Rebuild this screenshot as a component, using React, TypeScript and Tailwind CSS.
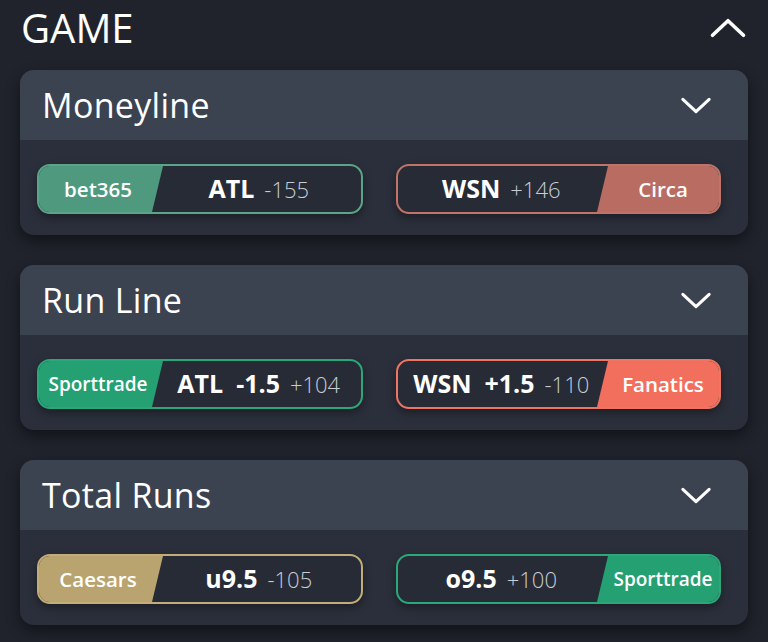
import React from 'react';

type Side = {
  book: string;
  color: string;
  main: string;
  odds: string;
};

type Market = {
  title: string;
  left: Side;
  right: Side;
};

const markets: Market[] = [
  {
    title: 'Moneyline',
    left: { book: 'bet365', color: 'green', main: 'ATL', odds: '-155' },
    right: { book: 'Circa', color: 'circa', main: 'WSN', odds: '+146' },
  },
  {
    title: 'Run Line',
    left: { book: 'Sporttrade', color: 'sporttrade', main: 'ATL  -1.5', odds: '+104' },
    right: { book: 'Fanatics', color: 'fanatics', main: 'WSN  +1.5', odds: '-110' },
  },
  {
    title: 'Total Runs',
    left: { book: 'Caesars', color: 'caesars', main: 'u9.5', odds: '-105' },
    right: { book: 'Sporttrade', color: 'sporttrade', main: 'o9.5', odds: '+100' },
  },
];

const colors: Record<string, { bg: string; border: string }> = {
  green: { bg: 'bg-[#4f9a7e]', border: 'border-[#5aa489]' },
  circa: { bg: 'bg-[#b96c62]', border: 'border-[#c07368]' },
  sporttrade: { bg: 'bg-[#24a073]', border: 'border-[#2aa87a]' },
  fanatics: { bg: 'bg-[#f26f5e]', border: 'border-[#f07463]' },
  caesars: { bg: 'bg-[#b9a470]', border: 'border-[#c2ad78]' },
};

function Chevron({ up, className }: { up?: boolean; className?: string }) {
  return (
    <svg viewBox="0 0 40 22" className={className} fill="none">
      <path
        d={up ? 'M3 19 L20 3 L37 19' : 'M3 3 L20 19 L37 3'}
        stroke="white"
        strokeWidth="4"
        strokeLinecap="round"
        strokeLinejoin="round"
      />
    </svg>
  );
}

function Pill({ side, bookLeft }: { side: Side; bookLeft: boolean }) {
  const c = colors[side.color];
  // long book names sit tighter in the coloured tab
  const labelSize = side.book.length > 8 ? 'text-[19px]' : 'text-[20.5px]';
  const label = (
    <div
      className={`${c.bg} ${labelSize} flex h-full items-center justify-center font-semibold text-white ${
        bookLeft
          ? 'w-[124px] pr-[6px] [clip-path:polygon(0_0,100%_0,calc(100%-11px)_100%,0_100%)]'
          : 'w-[122px] pl-[10px] [clip-path:polygon(11px_0,100%_0,100%_100%,0_100%)]'
      }`}
    >
      {side.book}
    </div>
  );
  const body = (
    <div
      className={`flex flex-1 items-center justify-center gap-[10px] whitespace-pre ${
        bookLeft ? '-ml-[6px]' : '-mr-[8px]'
      }`}
    >
      <span className="text-[25px] font-bold text-white">{side.main}</span>
      <span className="text-[22px] font-light text-[#c8ccd5]">{side.odds}</span>
    </div>
  );
  return (
    <div
      className={`flex h-[50px] overflow-hidden rounded-[13px] border-2 ${c.border} bg-[#272b36] shadow-[0_4px_8px_rgba(0,0,0,0.35)]`}
    >
      {bookLeft ? label : body}
      {bookLeft ? body : label}
    </div>
  );
}

function MarketCard({ market }: { market: Market }) {
  return (
    <div className="overflow-hidden rounded-[14px] bg-[#2b2f3b] shadow-[0_6px_14px_rgba(0,0,0,0.45)]">
      <div className="flex h-[70px] items-center justify-between bg-[#3b4250] pl-[22px] pr-[36px]">
        <span className="text-[34px] font-medium tracking-[0.3px] text-white">{market.title}</span>
        <Chevron className="h-[17px] w-[32px]" />
      </div>
      <div className="grid grid-cols-2 gap-[33px] pb-[21px] pl-[17px] pr-[27px] pt-[24px]">
        <Pill side={market.left} bookLeft />
        <Pill side={market.right} bookLeft={false} />
      </div>
    </div>
  );
}

export default function App() {
  return (
    <div
      className="h-[642px] w-[768px] overflow-hidden bg-[#20232c] px-5"
      style={{ fontFamily: '"Open Sans", "Liberation Sans", sans-serif' }}
    >
      <div className="mb-[16px] flex h-[54px] items-center justify-between pl-[1px] pt-[2px]">
        <span className="text-[40px] font-medium text-white">GAME</span>
        <Chevron up className="h-[20px] w-[40px]" />
      </div>
      <div className="flex flex-col gap-[30px]">
        {markets.map((m) => (
          <MarketCard key={m.title} market={m} />
        ))}
      </div>
    </div>
  );
}
